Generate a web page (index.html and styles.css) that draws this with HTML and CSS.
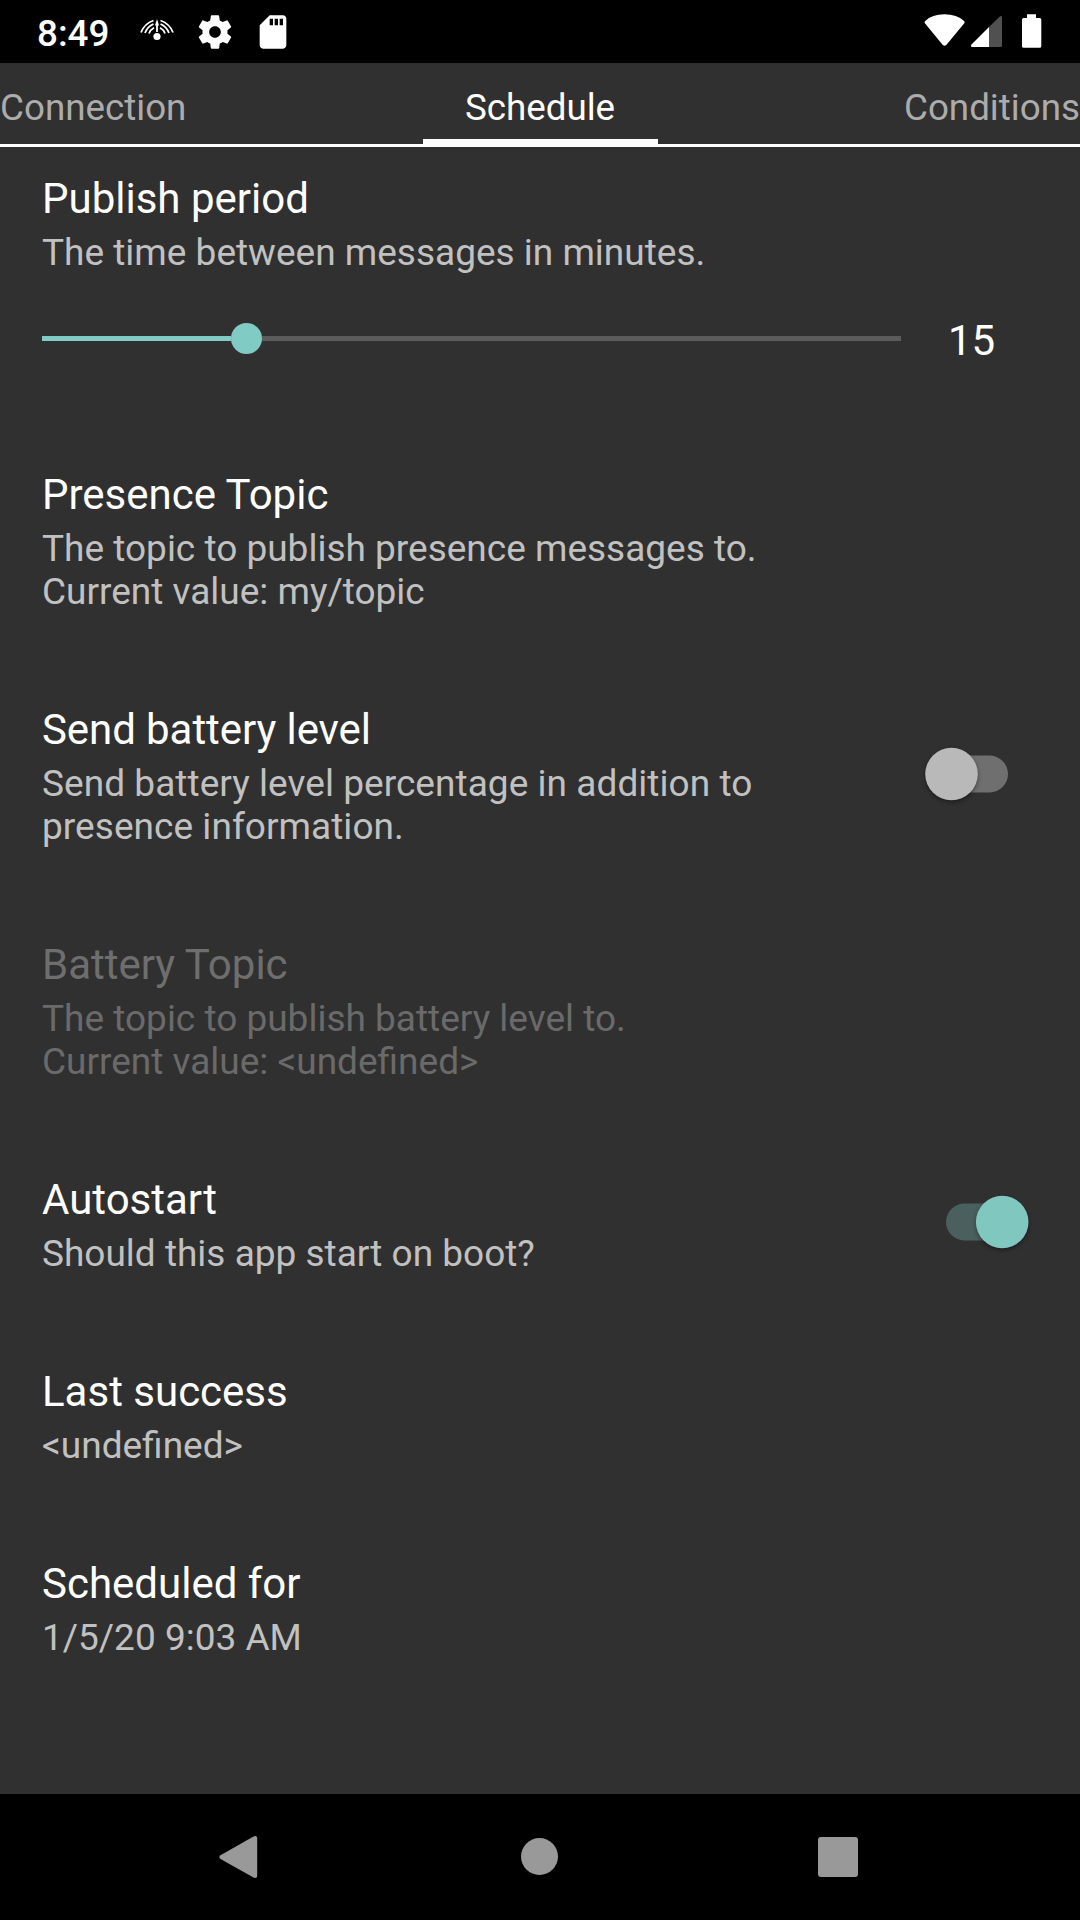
FILE: index.html
```html
<!DOCTYPE html>
<html lang="en">
<head>
<meta charset="utf-8">
<title>Schedule</title>
<link rel="stylesheet" href="styles.css">
</head>
<body>
<div class="screen">
  <header class="status">
    <div class="status-left">
      <span class="clock">8:49</span>
      <svg class="ic-signal" width="34" height="22" viewBox="0 0 34 22" fill="none" stroke="#fff" stroke-width="1.8">
        <circle cx="17" cy="17.500" r="3.600" fill="#fff" stroke="none"/>
        <path d="M17 13V3" stroke-width="1.8"/>
        <path d="M15 6.500L17 0l2 6.500z" fill="#fff" stroke="none"/>
        <path d="M1 13.500Q4.500 4.500 13.500 1.500M5 14Q7.500 7.500 13.500 5M9 14.500Q10.500 10.500 14 8.700"/>
        <path d="M33 13.500Q29.500 4.500 20.500 1.500M29 14Q26.500 7.500 20.500 5M25 14.500Q23.500 10.500 20 8.700"/>
      </svg>
      <svg class="ic-gear" width="40" height="40" viewBox="0 0 24 24" fill="#fff"><path d="M19.430 12.980c.04-.32.07-.64.07-.98s-.03-.66-.07-.98l2.110-1.650c.19-.15.24-.42.12-.64l-2-3.460c-.12-.22-.39-.3-.61-.22l-2.490 1c-.52-.4-1.080-.73-1.690-.98l-.38-2.650C14.460 2.180 14.250 2 14 2h-4c-.25 0-.46.18-.49.42l-.38 2.650c-.61.25-1.170.59-1.690.98l-2.490-1c-.23-.09-.49 0-.61.22l-2 3.460c-.13.22-.07.49.12.64l2.110 1.650c-.04.32-.07.65-.07.98s.03.66.07.98l-2.110 1.650c-.19.15-.24.42-.12.64l2 3.460c.12.22.39.3.61.22l2.490-1c.52.4 1.080.73 1.690.98l.38 2.650c.03.24.24.42.49.42h4c.25 0 .46-.18.49-.42l.38-2.650c.61-.25 1.170-.59 1.690-.98l2.490 1c.23.09.49 0 .61-.22l2-3.460c.12-.22.07-.49-.12-.64l-2.110-1.650zM12 15.500c-1.930 0-3.500-1.570-3.500-3.500s1.570-3.500 3.500-3.500 3.500 1.570 3.500 3.500-1.570 3.500-3.500 3.500z"/></svg>
      <svg class="ic-sd" width="40" height="40" viewBox="0 0 24 24" fill="#fff"><path d="M18 2h-8L4.020 8 4 20c0 1.100.9 2 2 2h12c1.100 0 2-.9 2-2V4c0-1.100-.9-2-2-2zm-6 6h-2V4h2v4zm3 0h-2V4h2v4zm3 0h-2V4h2v4z"/></svg>
    </div>
    <svg class="status-right" width="118" height="36" viewBox="0 0 118 36">
      <path d="M1.200 7Q8 .3 20.500.3T40 7Q41.300 8 40.300 9.300L22.300 31Q20.500 32.500 18.800 31L.9 9.300Q0 8 1.200 7z" fill="#fff"/>
      <path d="M65 13L47.500 30.500Q46.200 33 48 33H65z" fill="#fff"/>
      <path d="M65 13L75.500 2.700Q77.700 1 78 3.500V31.500Q78 33 76.500 33H65z" fill="#505050"/>
      <path d="M103 .3h9V4h3.700Q117.300 4 117.300 5.500V32.200Q117.300 33.800 115.700 33.800H99.600Q98 33.800 98 32.200V5.500Q98 4 99.600 4H103z" fill="#fff"/>
    </svg>
  </header>

  <nav class="tabs">
    <span class="tab">Connection</span>
    <span class="tab tab-active">Schedule</span>
    <span class="tab tab-end">Conditions</span>
  </nav>

  <main class="prefs">
    <section class="pref pref-slider">
      <div class="text">
        <h2>Publish period</h2>
        <p>The time between messages in minutes.</p>
        <div class="slider-row">
          <div class="track"><div class="fill"></div><div class="thumb"></div><div class="rest"></div></div>
          <span class="value">15</span>
        </div>
      </div>
    </section>
    <section class="pref">
      <div class="text">
        <h2>Presence Topic</h2>
        <p>The topic to publish presence messages to.<br>Current value: my/topic</p>
      </div>
    </section>
    <section class="pref pref-battery">
      <div class="text">
        <h2>Send battery level</h2>
        <p>Send battery level percentage in addition to<br>presence information.</p>
      </div>
      <svg class="switch switch-off" width="93" height="64" viewBox="0 0 93 64">
        <rect x="10" y="13.500" width="78" height="37" rx="18.500" fill="#6f6f6f"/>
        <circle class="knob" cx="31.500" cy="32" r="26.300" fill="#b9b9b9"/>
      </svg>
    </section>
    <section class="pref disabled">
      <div class="text">
        <h2>Battery Topic</h2>
        <p>The topic to publish battery level to.<br>Current value: &lt;undefined&gt;</p>
      </div>
    </section>
    <section class="pref">
      <div class="text">
        <h2>Autostart</h2>
        <p>Should this app start on boot?</p>
      </div>
      <svg class="switch" width="93" height="64" viewBox="0 0 93 64">
        <rect x="5" y="13.500" width="78" height="37" rx="18.500" fill="#4a605e"/>
        <circle class="knob" cx="61.200" cy="32" r="26.300" fill="#80c7c0"/>
      </svg>
    </section>
    <section class="pref">
      <div class="text">
        <h2>Last success</h2>
        <p>&lt;undefined&gt;</p>
      </div>
    </section>
    <section class="pref">
      <div class="text">
        <h2>Scheduled for</h2>
        <p>1/5/20 9:03 AM</p>
      </div>
    </section>
  </main>

  <footer class="navbar">
    <svg width="44" height="44" viewBox="0 0 44 44" fill="#999"><path d="M4.500 20.200L37.500 1.500Q41 .2 41.200 3V41Q41 43.800 37.500 42.500L4.500 24Q2.200 22 4.500 20.200z"/></svg>
    <svg width="44" height="44" viewBox="0 0 44 44" fill="#999"><circle cx="23.500" cy="21.500" r="18.500"/></svg>
    <svg width="44" height="44" viewBox="0 0 44 44" fill="#999"><rect x="2" y="2" width="40" height="40" rx="3"/></svg>
  </footer>
</div>
</body>
</html>
```
FILE: styles.css
```css
* { box-sizing: border-box; }
body { margin: 0; background: #303030; font-family: Roboto, sans-serif; color: #fff; }
h2, p { margin: 0; font-weight: 400; }
svg { display: block; flex: none; }
.screen { width: 1080px; height: 1920px; display: flex; flex-direction: column; overflow: hidden; }

.status { height: 63px; flex: none; background: #000; display: flex; justify-content: space-between; align-items: flex-start; padding: 0 38px 0 37px; }
.status-left { display: flex; align-items: flex-start; }
.clock { font-size: 36.75px; font-weight: 500; line-height: 43px; margin-top: 12px; width: 103px; }
.ic-signal { margin-top: 19px; }
.ic-gear { margin: 12px 0 0 21px; }
.ic-sd { margin: 12px 0 0 18px; }
.status-right { margin-top: 14px; }

.tabs { height: 84px; flex: none; display: grid; grid-template-columns: 1fr 235px 1fr; border-bottom: 3px solid #fff; font-size: 36.75px; line-height: 43px; }
.tab { padding-top: 23px; color: #acacac; }
.tab-active { color: #fff; text-align: center; border-bottom: 5px solid #fff; }
.tab-end { text-align: right; }

.prefs { flex: 1; display: flex; flex-direction: column; padding-left: 42px; }
.pref { display: flex; justify-content: space-between; align-items: center; padding: 46px 46px 46px 0; }
.pref h2 { font-size: 42px; line-height: 49px; margin-bottom: 8px; }
.pref p { font-size: 37px; line-height: 43px; color: #c1c1c1; }
.pref-battery h2 { letter-spacing: -.08px; }
.pref-battery p { letter-spacing: .05px; }
.pref.disabled h2 { color: #6e6e6e; }
.pref.disabled p { color: #6a6a6a; }
.pref-slider { padding: 27px 0 0; height: 277px; align-items: flex-start; }
.slider-row { display: flex; align-items: center; margin-top: 38px; }
.track { width: 859px; height: 49px; display: flex; align-items: center; }
.fill { width: 189px; height: 5px; background: #80cbc4; }
.thumb { width: 31px; height: 31px; border-radius: 50%; background: #80cbc4; }
.rest { flex: 1; height: 5px; background: #5c5c5c; }
.value { font-size: 42px; line-height: 49px; margin: 4px 0 0 47px; }
.switch { margin: -6px 0 0 0; }
.switch-off { margin: -5px 21px 0 0; }
.knob { filter: drop-shadow(0 2px 2px rgba(0, 0, 0, .4)); }

.navbar { height: 126px; flex: none; background: #000; display: flex; justify-content: space-between; align-items: center; padding: 0 220px 0 216px; }
```
